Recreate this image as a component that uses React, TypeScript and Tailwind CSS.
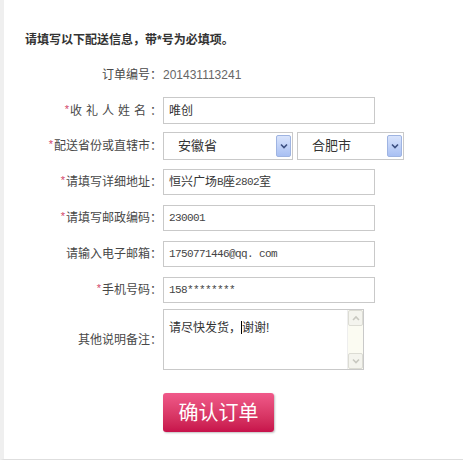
import React from "react"

function Label({ req, children }: { req?: boolean; children: React.ReactNode }) {
  return (
    <div className="w-[158px] shrink-0 text-right text-[12px] text-[#484848] leading-none">
      {req && <span className="text-[#d2476a] text-[11px] mr-[1px] relative top-[-2px]">*</span>}
      {children}
    </div>
  )
}

function Field({ children, w = "w-[212px]" }: { children: React.ReactNode; w?: string }) {
  return (
    <div
      className={`${w} h-full ml-[1px] border border-[#c9c9c9] bg-white pl-[5px] flex items-center text-[12px] text-[#333]`}
    >
      {children}
    </div>
  )
}

const mono = "font-['Liberation_Mono',monospace] text-[11px] tracking-[-0.6px] text-[#444]"

function Chevron({ up }: { up?: boolean }) {
  return (
    <svg width="8" height="6" viewBox="0 0 8 6">
      <polyline
        points={up ? "1,5 4,2 7,5" : "1,1.5 4,4.5 7,1.5"}
        fill="none"
        stroke="currentColor"
        strokeWidth="1.6"
      />
    </svg>
  )
}

function Select({ value, w }: { value: string; w: string }) {
  return (
    <div className={`${w} h-full border border-[#c9c9c9] bg-white flex items-stretch p-[1px]`}>
      <div className="flex-1 flex items-end pb-[3px] pl-[13px] text-[13px] text-[#333]">{value}</div>
      <div className="w-[15px] my-[1px] rounded-[2px] border border-[#9fb4e2] bg-gradient-to-b from-[#d9e4fc] to-[#a9c0f3] flex items-center justify-center text-[#3c4f80]">
        <Chevron />
      </div>
    </div>
  )
}

export default function App() {
  return (
    <div className="w-[463px] h-[469px] bg-white font-['Liberation_Sans','Noto_Sans_CJK_SC',sans-serif]">
      <div className="h-[460px] border-l-4 border-b border-l-[#efefef] border-b-[#dedede] pt-[33px] flex flex-col">
        {/* title */}
        <div className="pl-[21px] text-[12px] font-bold text-[#333] leading-[14px]">
          请填写以下配送信息，带*号为必填项。
        </div>

        <div className="mt-[14px] h-[27px] flex items-center">
          <Label>订单编号：</Label>
          <div className="ml-[1px] text-[12px] text-[#666]">201431113241</div>
        </div>

        <div className="mt-[9px] h-[27px] flex items-center">
          <Label req>
            <span className="tracking-[4px]">收礼人姓名</span>：
          </Label>
          <Field>唯创</Field>
        </div>

        <div className="mt-[8px] h-[28px] flex items-center">
          <Label req>配送省份或直辖市：</Label>
          <div className="ml-[1px] h-full flex gap-[4px]">
            <Select value="安徽省" w="w-[130px]" />
            <Select value="合肥市" w="w-[107px]" />
          </div>
        </div>

        <div className="mt-[9px] h-[26px] flex items-center">
          <Label req>请填写详细地址：</Label>
          <Field>
            恒兴广场<span className={mono}>B</span>座<span className={mono}>2802</span>室
          </Field>
        </div>

        <div className="mt-[10px] h-[26px] flex items-center">
          <Label req>请填写邮政编码：</Label>
          <Field>
            <span className={mono}>230001</span>
          </Field>
        </div>

        <div className="mt-[10px] h-[26px] flex items-center">
          <Label>请输入电子邮箱：</Label>
          <Field>
            <span className={mono}>1750771446@qq. com</span>
          </Field>
        </div>

        <div className="mt-[10px] h-[26px] flex items-center">
          <Label req>手机号码：</Label>
          <Field>
            <span className={mono}>158********</span>
          </Field>
        </div>

        <div className="mt-[6px] h-[61px] flex items-center">
          <Label>其他说明备注：</Label>
          <div className="ml-[1px] w-[201px] h-full border border-[#c9c9c9] bg-white flex">
            <div className="flex-1 pl-[5px] pt-[11px] text-[12px] text-[#333] leading-none">
              请尽快发货，<span className="inline-block w-[1px] h-[13px] bg-black align-[-2px]" />谢谢!
            </div>
            <div className="w-[16px] bg-[#fbfbf2] flex flex-col justify-between border-l border-[#eee]">
              <div className="h-[16px] border border-[#dcdcd4] bg-[#f4f4ee] rounded-[2px] flex items-center justify-center text-[#c8c8c0]">
                <Chevron up />
              </div>
              <div className="h-[16px] border border-[#dcdcd4] bg-[#f4f4ee] rounded-[2px] flex items-center justify-center text-[#c8c8c0]">
                <Chevron />
              </div>
            </div>
          </div>
        </div>

        <div className="mt-[23px] pl-[159px]">
          <button className="w-[111px] h-[39px] rounded-[3px] bg-gradient-to-b from-[#f0598a] to-[#c7114b] text-white text-[20px] shadow-[1px_1px_2px_rgba(0,0,0,0.25)] flex items-center justify-center">
            确认订单
          </button>
        </div>
      </div>
    </div>
  )
}
